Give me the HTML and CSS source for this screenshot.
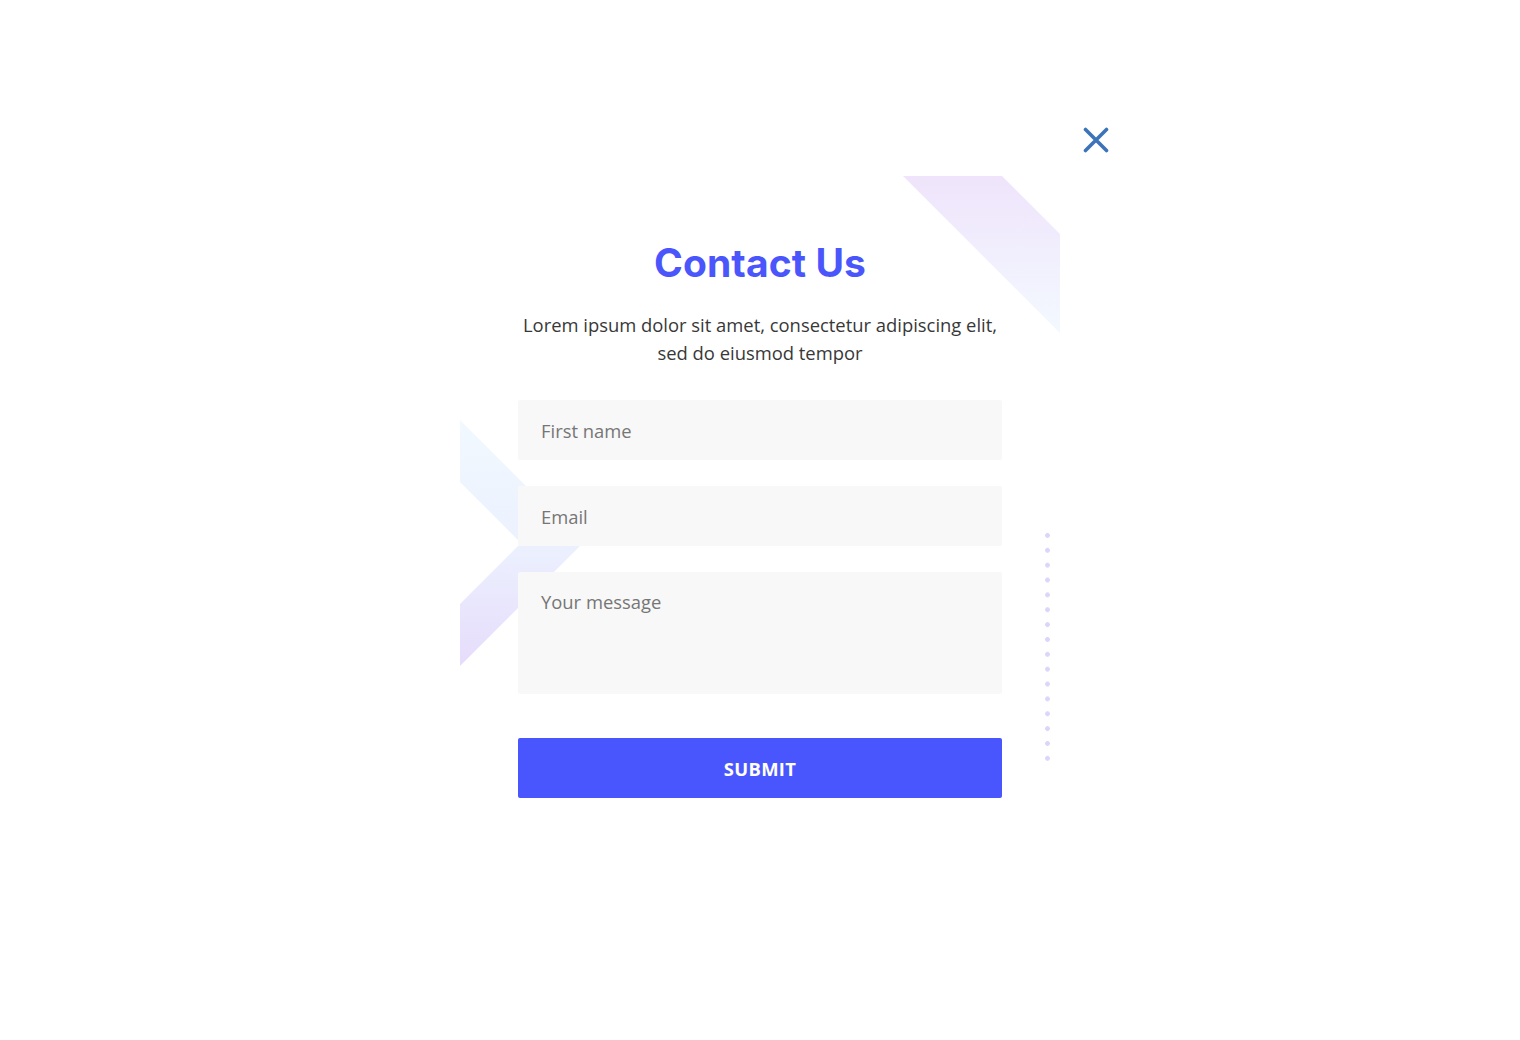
FILE: index.html
```html
<!DOCTYPE html>
<html lang="en">
<head>
<meta charset="utf-8">
<title>Contact Us</title>
<link rel="stylesheet" href="styles.css">
</head>
<body>
<div class="page">
  <div class="modal">
    <button class="close" type="button" aria-label="Close">
      <svg width="26" height="26" viewBox="0 0 26 26"><path d="M2.5 2.5 L23.5 23.5 M23.5 2.5 L2.5 23.5" stroke="#3d73b9" stroke-width="3.6" stroke-linecap="round" fill="none"/></svg>
    </button>
    <div class="card">
      <svg class="deco deco-top" width="160" height="160" viewBox="0 0 160 160">
        <defs>
          <linearGradient id="gt" x1="0" y1="0" x2="0" y2="1">
            <stop offset="0" stop-color="#efe4fb"/>
            <stop offset="1" stop-color="#f3f9ff"/>
          </linearGradient>
        </defs>
        <polygon points="3,0 102,0 160,58 160,157" fill="url(#gt)"/>
      </svg>
      <svg class="deco deco-left" width="130" height="250" viewBox="0 0 130 250">
        <defs>
          <linearGradient id="gl" x1="0" y1="0" x2="0" y2="1">
            <stop offset="0" stop-color="#f1f9ff"/>
            <stop offset="0.5" stop-color="#ecf1fe"/>
            <stop offset="1" stop-color="#e6dcfb"/>
          </linearGradient>
        </defs>
        <polygon points="0,0 123,123 0,246 0,184 61,123 0,62" fill="url(#gl)"/>
      </svg>
      <div class="dots"></div>

      <h1 class="title">Contact Us</h1>
      <p class="lead">Lorem ipsum dolor sit amet, consectetur adipiscing elit,<br>sed do eiusmod tempor</p>
      <form class="form">
        <input class="field" type="text" placeholder="First name">
        <input class="field" type="email" placeholder="Email">
        <textarea class="field area" placeholder="Your message"></textarea>
        <button class="submit" type="button">SUBMIT</button>
      </form>
    </div>
  </div>
</div>
</body>
</html>
```

FILE: styles.css
```css
* { box-sizing: border-box; }
html, body { margin: 0; padding: 0; background: #ffffff; }
body { font-family: "Open Sans", "Noto Sans", sans-serif; }

.page {
  width: 1520px;
  height: 1040px;
  display: flex;
  align-items: center;
  justify-content: center;
  padding-bottom: 2px;
}

.modal {
  position: relative;
  width: 600px;
}

.close {
  position: absolute;
  top: -49px;
  right: -49px;
  width: 26px;
  height: 26px;
  padding: 0;
  border: 0;
  background: transparent;
  cursor: pointer;
  display: block;
}
.close svg { display: block; }

.card {
  position: relative;
  overflow: hidden;
  background: #ffffff;
  padding: 63px 58px 65px;
  display: flex;
  flex-direction: column;
  align-items: center;
  height: 686px;
}

.deco { position: absolute; display: block; }
.deco-top { top: 0; right: 0; }
.deco-left { left: 0; top: 244px; }

.dots {
  position: absolute;
  left: 584px;
  top: 352px;
  width: 7px;
  height: 238px;
  background-image: radial-gradient(circle at center, #dbd5fa 0, #dbd5fa 2px, rgba(219,213,250,0) 2.8px);
  background-size: 7px 14.87px;
  background-repeat: repeat-y;
}

.title {
  position: relative;
  margin: 0;
  font-family: "Inter", "Noto Sans", sans-serif;
  font-weight: 700;
  font-size: 39px;
  line-height: 48px;
  color: #4a56fb;
  letter-spacing: 0.1px;
}

.lead {
  position: relative;
  margin: 24px 0 0;
  font-size: 18.4px;
  line-height: 28px;
  color: #383838;
  text-align: center;
}

.form {
  position: relative;
  width: 484px;
  margin-top: 33px;
  display: flex;
  flex-direction: column;
  gap: 26px;
}

.field {
  display: block;
  width: 100%;
  height: 60px;
  border: 0;
  border-radius: 2px;
  background: #f8f8f8;
  padding: 0 23px;
  font-family: "Open Sans", "Noto Sans", sans-serif;
  font-size: 18.4px;
  color: #333;
  outline: none;
}
.field::placeholder { color: #767676; opacity: 1; }

.area {
  height: 122px;
  padding: 16px 23px;
  line-height: 28px;
  resize: none;
}

.submit {
  margin-top: 18px;
  height: 60px;
  width: 100%;
  border: 0;
  border-radius: 2px;
  background: #4a56fd;
  color: #ffffff;
  font-family: "Open Sans", "Noto Sans", sans-serif;
  font-weight: 700;
  font-size: 18.4px;
  letter-spacing: 0.3px;
  cursor: pointer;
}
```
